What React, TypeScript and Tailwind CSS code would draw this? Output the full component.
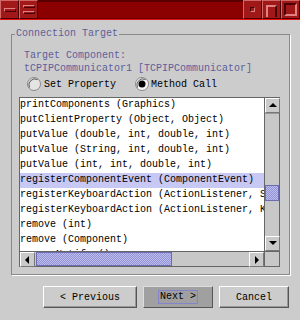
import React from 'react';

const items = [
    'printComponents (Graphics)',
    'putClientProperty (Object, Object)',
    'putValue (double, int, double, int)',
    'putValue (String, int, double, int)',
    'putValue (int, int, double, int)',
    'registerComponentEvent (ComponentEvent)',
    'registerKeyboardAction (ActionListener, String, KeyStroke, int)',
    'registerKeyboardAction (ActionListener, KeyStroke, int)',
    'remove (int)',
    'remove (Component)',
    'removeNotify ()',
];

const TitleButton = ({children}: {children?: React.ReactNode}) => (
    <div className="w-[19px] h-[19px] flex items-center justify-center bg-[#a01818] border border-t-[#d06868] border-l-[#d06868] border-b-[#4a0000] border-r-[#4a0000]">
        {children}
    </div>
);

const Arrow = ({dir}: {dir: 'up' | 'down' | 'left' | 'right'}) => {
    const pts = {
        up: '1,6 5,2 9,6',
        down: '1,2 5,6 9,2',
        left: '6,1 2,5 6,9',
        right: '3,1 7,5 3,9',
    }[dir];
    return (
        <div className="w-[15px] h-[15px] shrink-0 flex items-center justify-center bg-[#cacaca] border border-t-white border-l-white border-b-[#777] border-r-[#777]">
            <svg width="10" height="10" viewBox="0 0 10 10"><polygon points={pts} fill="#000" /></svg>
        </div>
    );
};

const Thumb = ({className}: {className: string}) => (
    <div className={"border border-[#6c6cb0] bg-[#a8a8e0] bg-[image:repeating-conic-gradient(#9494d4_0%_25%,#bcbcee_0%_50%)] bg-[length:2px_2px] " + className} />
);

export default function App() {
    return (
        <div className="w-[300px] h-[320px] bg-[#cccccc] flex flex-col font-['Liberation_Mono',monospace] text-[10px] overflow-hidden">
            {/* title bar */}
            <div className="flex h-[19px] bg-[#8b0000]">
                <TitleButton>
                    <div className="w-[12px] h-[4px] bg-[#a01818] border border-t-[#e08080] border-l-[#e08080] border-b-[#4a0000] border-r-[#4a0000]" />
                </TitleButton>
                <TitleButton>
                    <div className="flex flex-col gap-[3px]">
                        <div className="w-[12px] h-[3px] border border-t-[#e08080] border-l-[#e08080] border-b-[#4a0000] border-r-[#4a0000]" />
                        <div className="w-[12px] h-[3px] border border-t-[#e08080] border-l-[#e08080] border-b-[#4a0000] border-r-[#4a0000]" />
                    </div>
                </TitleButton>
                <div className="flex-1 border-t-2 border-[#5a0000] border-b border-b-[#6a0000]" />
                <TitleButton>
                    <div className="w-[5px] h-[5px] border border-t-[#4a0000] border-l-[#4a0000] border-b-[#e08080] border-r-[#e08080]" />
                </TitleButton>
                <TitleButton>
                    <div className="w-[11px] h-[12px] mt-[3px] border-2 border-b-0 border-t-[#e08080] border-l-[#e08080] border-r-[#4a0000]" />
                </TitleButton>
                <TitleButton>
                    <div className="w-[13px] h-[13px] border-2 border-t-[#4a0000] border-l-[#4a0000] border-b-[#e08080] border-r-[#e08080]" />
                </TitleButton>
            </div>
            <div className="h-[1px] bg-[#e01010]" />

            {/* group box */}
            <fieldset className="mt-[8px] ml-[11px] w-[279px] border border-[#8a8a8a] shadow-[1px_1px_0_#ffffff] px-[3px] pb-[7px]">
                <legend className="px-[1px] leading-[12px] text-[#5e5e9c]">Connection Target</legend>
                <div className="pt-[9px] pl-[9px] text-[#5e5e9c] leading-[13px]">
                    <div>Target Component:</div>
                    <div className="whitespace-nowrap">tCPIPCommunicator1 [TCPIPCommunicator]</div>
                </div>
                <div className="mt-[1px] h-[16px] flex items-center pl-[12px] text-black">
                    <svg width="14" height="14" viewBox="0 0 14 14">
                        <circle cx="7" cy="7" r="6.5" fill="#e4e4e4" stroke="#888" />
                        <path d="M2.5 10.5 A6 6 0 0 1 10.5 2.5" fill="none" stroke="#555" />
                    </svg>
                    <span className="ml-[3px]">Set Property</span>
                    <svg className="ml-[19px]" width="14" height="14" viewBox="0 0 14 14">
                        <circle cx="7" cy="7" r="6.5" fill="#f4f4f4" stroke="#888" />
                        <path d="M2.5 10.5 A6 6 0 0 1 10.5 2.5" fill="none" stroke="#555" />
                        <circle cx="7" cy="7" r="3.5" fill="#000" />
                    </svg>
                    <span className="ml-[2px]">Method Call</span>
                </div>

                {/* list */}
                <div className="mt-[5px] ml-[4px] w-[261px] h-[170px] border border-[#666] bg-white grid grid-cols-[1fr_15px] grid-rows-[1fr_15px]">
                    <div className="overflow-hidden">
                        {items.map((item, i) => (
                            <div key={i} className={"h-[15px] leading-[14px] whitespace-nowrap text-black " + (i === 5 ? 'bg-[#c8c8f4]' : '')}>
                                {item}
                            </div>
                        ))}
                    </div>
                    <div className="flex flex-col bg-[#c8c8c8] border-l border-[#666]">
                        <Arrow dir="up" />
                        <div className="flex-1 border-t border-[#999]">
                            <Thumb className="mt-[71px] h-[16px]" />
                        </div>
                        <Arrow dir="down" />
                    </div>
                    <div className="flex bg-[#c8c8c8] border-t border-[#666]">
                        <Arrow dir="left" />
                        <Thumb className="ml-[1px] w-[136px]" />
                        <div className="flex-1" />
                        <Arrow dir="right" />
                    </div>
                    <div className="bg-[#c8c8c8] border-t border-l border-[#666]" />
                </div>
            </fieldset>

            {/* buttons */}
            <div className="mt-[11px] ml-[43px] flex gap-[6px] text-black">
                <button className="w-[94px] h-[22px] bg-[#cccccc] border border-t-white border-l-white border-b-[#555] border-r-[#555] shadow-[inset_-1px_-1px_0_#999]">
                    &lt; Previous
                </button>
                <button className="w-[70px] h-[22px] bg-[#a0a0a0] border border-t-[#dddddd] border-l-[#dddddd] border-b-[#555] border-r-[#555] flex items-center justify-center">
                    <span className="border border-[#8484cc] px-[1px] leading-[12px]">Next &gt;</span>
                </button>
                <button className="w-[70px] h-[22px] bg-[#cccccc] border border-t-white border-l-white border-b-[#555] border-r-[#555] shadow-[inset_-1px_-1px_0_#999]">
                    Cancel
                </button>
            </div>
        </div>
    );
}
